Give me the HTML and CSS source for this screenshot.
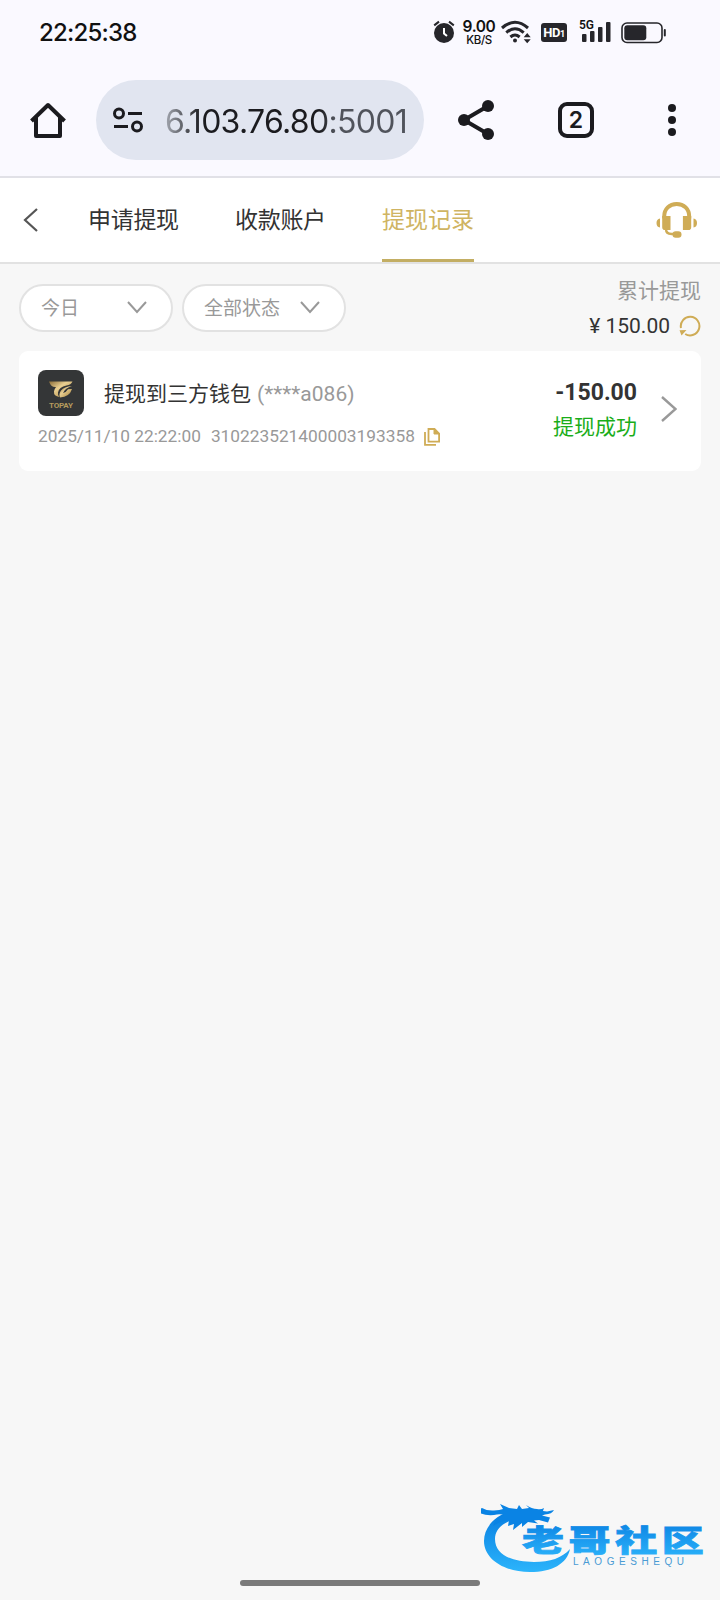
FILE: index.html
```html
<!DOCTYPE html>
<html lang="zh-CN">

	<head>
		<meta charset="UTF-8">
		<title>提现记录</title>
		<link rel="stylesheet" href="styles.css">
	</head>

	<body>
		<div class="status">
			<span class="clock">22:25:38</span>
			<div class="status-icons">
				<svg class="alarm" width="22" height="24" viewBox="0 0 22 24">
					<circle cx="11" cy="13" r="10" fill="#26262b" />
					<path d="M1.2 5.4L6 1.6M20.8 5.4L16 1.6" stroke="#26262b" stroke-width="2" />
					<path d="M11 8v5.5l3 2.6" fill="none" stroke="#fff" stroke-width="2" />
				</svg>
				<div class="speed"><b>9.00</b><span>KB/S</span></div>
				<svg class="wifi" width="30" height="24" viewBox="0 0 30 24" fill="none" stroke="#26262b" stroke-width="3">
					<path d="M1 8Q14-3.4 27 8M5.3 12.6Q14 5 22.7 12.6M9.4 17Q14 13 18.6 17" />
					<circle cx="14" cy="20.5" r="2" fill="#26262b" stroke="none" />
					<path d="M22.7 17.2h7L26.2 13zM22.7 19.2h7L26.2 23.2z" fill="#26262b" stroke="none" />
				</svg>
				<div class="hd">HD<small>1</small></div>
				<div class="signal">
					<span>5G</span>
					<svg width="30" height="22" viewBox="0 0 30 22" fill="#26262b">
						<rect x="1" y="14" width="4.5" height="8" rx="1" />
						<rect x="9" y="11" width="4.5" height="11" rx="1" />
						<rect x="17" y="7" width="4.5" height="15" rx="1" />
						<rect x="25" y="2" width="4.5" height="20" rx="1" />
					</svg>
				</div>
				<svg class="battery" width="45" height="22" viewBox="0 0 45 22">
					<rect x="1" y="1" width="40" height="19.5" rx="5" fill="none" stroke="#26262b" stroke-width="1.6" />
					<rect x="3.3" y="3.3" width="22" height="15" rx="3" fill="#26262b" />
					<rect x="42.8" y="7" width="2" height="7.5" rx="1" fill="#26262b" />
				</svg>
			</div>
		</div>

		<div class="browser">
			<svg class="home" width="36" height="36" viewBox="0 0 36 36" fill="none" stroke="#1b1b1f" stroke-width="4" stroke-linejoin="round">
				<path d="M1.5 19L18 3l16.5 16" />
				<path d="M6 15v19h24V15" />
			</svg>
			<div class="address">
				<svg width="30" height="26" viewBox="0 0 30 26" fill="none" stroke="#1b1b1f" stroke-width="3">
					<circle cx="6" cy="6.5" r="4.5" />
					<circle cx="24" cy="19.5" r="4.5" />
					<path d="M15 6.5h14M1 19.5h14" />
				</svg>
				<span class="url">6.103.76.80:5001</span>
			</div>
			<svg class="share" width="36" height="40" viewBox="0 0 36 40" fill="#1b1b1f">
				<path d="M30 6L6 20l24 14" fill="none" stroke="#1b1b1f" stroke-width="4" />
				<circle cx="6" cy="20" r="6" />
				<circle cx="30" cy="6" r="6" />
				<circle cx="30" cy="34" r="6" />
			</svg>
			<div class="tabs-count">2</div>
			<svg class="dots" width="8" height="32" viewBox="0 0 8 32" fill="#1b1b1f">
				<circle cx="4" cy="4" r="4" />
				<circle cx="4" cy="16" r="4" />
				<circle cx="4" cy="28" r="4" />
			</svg>
		</div>

		<div class="nav">
			<svg class="back" width="16" height="24" viewBox="0 0 16 24" fill="none" stroke="#555" stroke-width="2.2">
				<path d="M14 1L2 12l12 11" />
			</svg>
			<ul class="tabs">
				<li>申请提现</li>
				<li>收款账户</li>
				<li class="active">提现记录</li>
			</ul>
			<svg class="service" width="42" height="36" viewBox="0 0 42 36" fill="#cfac56">
				<path d="M8.2 16.5V14.5C8.2 7 13.5 2 20.700 2s12.500 5 12.500 12.500v2" fill="none" stroke="#cfac56" stroke-width="4" />
				<path d="M6.2 14h8.300v14H9q-2.800 0-2.800-2.800zM35.200 14h-8.300v14h5.500q2.800 0 2.800-2.800z" />
				<path d="M4 16.5v9Q0.500 25 0.500 21t3.500-4.500zM37.500 16.500v9Q41 25 41 21t-3.500-4.500z" />
				<path d="M10 27q0 5 5.500 5h5" fill="none" stroke="#cfac56" stroke-width="2.4" />
				<rect x="16.5" y="29.3" width="9" height="6.4" rx="3.2" />
			</svg>
		</div>

		<div class="filter">
			<div class="select day">
				<span>今日</span>
				<svg width="20" height="13" viewBox="0 0 20 13"><path d="M1 1l9 10 9-10" /></svg>
			</div>
			<div class="select state">
				<span>全部状态</span>
				<svg width="20" height="13" viewBox="0 0 20 13"><path d="M1 1l9 10 9-10" /></svg>
			</div>
			<div class="total">
				<p>累计提现</p>
				<div class="sum">
					<span>¥ 150.00</span>
					<svg width="22" height="22" viewBox="0 0 22 22" fill="none" stroke="#cfac56" stroke-width="2">
						<path d="M2 13A9.300 9.300 0 1 1 6.200 19" />
						<path d="M.5 15.300l7-.2-5 5.500z" fill="#cfac56" stroke="none" />
					</svg>
				</div>
			</div>
		</div>

		<div class="record">
			<div class="info">
				<div class="title">
					<svg class="pay" width="46" height="46" viewBox="0 0 46 46">
						<defs>
							<linearGradient id="gold" x1="0" y1="0" x2="1" y2="1">
								<stop offset="0" stop-color="#8a6c38" />
								<stop offset=".4" stop-color="#e9cf91" />
								<stop offset="1" stop-color="#a37c35" />
							</linearGradient>
						</defs>
						<rect width="46" height="46" rx="8" fill="#343637" />
						<path d="M11 11.500h23.500q-1.500 3.500-6 4-7.500 1.500-8.500 7-.5 3 1.500 4.500-6-1-5.500-5.500.3-2.500 2-4.500-5 .5-7-5.500z" fill="url(#gold)" />
						<path d="M34 16q-8 .5-11 4.500-2.500 3.500-1 7 9.500-.5 12-8.500l-4 .3q-1.500 3-5 3.700 2-5 9-7z" fill="url(#gold)" />
						<text x="11" y="38" textLength="24" lengthAdjust="spacing" fill="#b59a5d">TOPAY</text>
					</svg>
					<span class="name">提现到三方钱包</span>
					<span class="account">(****a086)</span>
				</div>
				<div class="meta">
					<span class="time">2025/11/10 22:22:00</span>
					<span class="order">310223521400003193358</span>
					<svg width="16" height="18" viewBox="0 0 16 18" fill="none" stroke="#cfac56" stroke-width="1.8">
						<path d="M4.500 1h6l4.600 4.600v8H4.500z" />
						<path d="M10 1v5h5z" fill="#cfac56" stroke-width="1" />
						<path d="M1 4v12.800h11" />
					</svg>
				</div>
			</div>
			<div class="result">
				<b>-150.00</b>
				<span>提现成功</span>
			</div>
			<svg class="more" width="16" height="26" viewBox="0 0 16 26" fill="none" stroke="#999" stroke-width="2.4">
				<path d="M1 1l13.500 12L1 25" />
			</svg>
		</div>

		<div class="home-bar"></div>

		<svg class="watermark" width="226" height="76" viewBox="0 0 226 76">
			<defs>
				<linearGradient id="blue" x1="0" y1="0" x2="0" y2="1">
					<stop offset="0" stop-color="#087de0" />
					<stop offset="1" stop-color="#2cb4fb" />
				</linearGradient>
			</defs>
			<path d="M30 12C13 17 3 29 3 42c0 18 20 31 46 31 22 0 37-8 40-23-8 9-20 13-36 13-22 0-39-7-39-23 0-11 10-18 24-21z" fill="url(#blue)" />
			<path d="M1 9q5 3 12 2.500 6-.5 9-1.500L19 5l9 4 8 1 2-4 3 4 7-1-3-3q6 4 11 4 4 1 7-1l-1 3 4 .5 7-1.500q-2 4-9 4.500l-3 1 8 2-2 5-9-2.500-5 .5 4 3-10-1.500-6 5 0-4-9 7 1-6-6 2 1-6q-9 1-16 6 2-7 11-11-4-1.500-10 0-11 1-17-4z" fill="#0a83e4" />
			<g fill="url(#blue)" stroke="url(#blue)" stroke-width=".8" transform="translate(41 52) scale(1.4 .98)">
				<text class="wm-name" x="0" y="0">老哥社区</text>
			</g>
			<text class="wm-sub" x="92" y="66" textLength="111" fill="#4a9bd4">LAOGESHEQU</text>
		</svg>
	</body>

</html>
```
FILE: styles.css
```css
* {
	margin: 0;
	padding: 0;
	box-sizing: border-box;
}

ul,
li {
	list-style: none;
}

svg {
	display: block;
	flex: none;
}

body {
	position: relative;
	height: 1600px;
	overflow: hidden;
	background: #f7f7f7;
	color: #333;
	font-family: Roboto, "Noto Sans CJK SC", sans-serif;
	white-space: nowrap;
}

/* 状态栏 */
.status {
	display: flex;
	justify-content: space-between;
	height: 64px;
	padding: 0 54px 0 39px;
	background: #faf9ff;
	color: #111;
}

.clock {
	font: 500 24px/66px Inter, sans-serif;
	letter-spacing: -0.8px;
}

.status-icons {
	display: flex;
	align-items: flex-start;
	padding-top: 20px;
}

.speed {
	width: 34px;
	margin-left: 7px;
	text-align: center;
}

.speed b,
.speed span {
	display: block;
	font: 600 15.5px/14px Inter, sans-serif;
	letter-spacing: -0.4px;
}

.speed span {
	font-size: 11.5px;
	font-weight: 500;
	line-height: 13px;
}

.wifi {
	margin-left: 5px;
}

.hd {
	width: 26px;
	height: 19px;
	margin: 3px 0 0 10px;
	border-radius: 3px;
	background: #26262b;
	color: #fff;
	font: bold 13px/19px Roboto, sans-serif;
	letter-spacing: -0.5px;
	text-align: center;
}

.hd small {
	font-size: 9px;
}

.signal {
	position: relative;
	margin-left: 14px;
}

.signal span {
	position: absolute;
	left: -2px;
	top: 0;
	background: #faf9ff;
	font: 600 12px/11px Roboto, sans-serif;
}

.battery {
	margin: 2px 0 0 10px;
}

/* 浏览器工具栏 */
.browser {
	display: flex;
	align-items: center;
	height: 114px;
	padding: 0 44px 0 30px;
	border-bottom: 2px solid #e1e1e7;
	background: #faf9ff;
}

.address {
	display: flex;
	align-items: center;
	width: 328px;
	height: 80px;
	margin-left: 30px;
	padding-left: 17px;
	border-radius: 40px;
	background: #e1e5f0;
}

.url {
	margin: 3px 0 0 22px;
	background: linear-gradient(90deg, #a3a7b0 0, #1b1b1f 15%, #1b1b1f 64%, #50535b 70%, #50535b 100%);
	-webkit-background-clip: text;
	background-clip: text;
	color: transparent;
	font: 32px/40px Inter, sans-serif;
	letter-spacing: -0.7px;
}

.share {
	margin-left: 34px;
}

.tabs-count {
	width: 36px;
	height: 36px;
	margin-left: 64px;
	border: 4px solid #1b1b1f;
	border-radius: 9px;
	color: #1b1b1f;
	font: 600 23px/28px Inter, sans-serif;
	text-align: center;
}

.dots {
	margin-left: auto;
}

/* 顶部导航 */
.nav {
	display: flex;
	align-items: center;
	height: 86px;
	padding: 0 22px 0 23px;
	border-bottom: 2px solid #e2e2e2;
	background: #fff;
}

.tabs {
	display: flex;
	gap: 55px;
	height: 84px;
	margin-left: 49px;
}

.tabs li {
	width: 92px;
	font-size: 23px;
	line-height: 85px;
	letter-spacing: -0.3px;
}

.tabs li.active {
	height: 84px;
	border-bottom: 3px solid #c3ae63;
	color: #cfb462;
	letter-spacing: 0;
}

.service {
	margin-left: auto;
}

/* 筛选 */
.filter {
	display: flex;
	height: 87px;
	padding: 0 19px;
}

.select {
	display: flex;
	align-items: center;
	justify-content: space-between;
	height: 48px;
	margin-top: 20px;
	padding: 0 24px 3px 20px;
	border: 2px solid #e2e2e2;
	border-radius: 24px;
	background: #fff;
	color: #999;
	font-size: 19px;
}

.day {
	width: 154px;
}

.state {
	width: 164px;
	margin-left: 9px;
}

.select svg {
	margin-top: 2px;
	fill: none;
	stroke: #999;
	stroke-width: 2;
}

.total {
	margin-left: auto;
	color: #999;
	font-size: 21px;
	line-height: 34px;
	padding-top: 10px;
}

.total p {
	text-align: right;
}

.sum {
	display: flex;
	align-items: center;
	gap: 9px;
	padding-top: 1px;
	color: #333;
}

/* 提现记录 */
.record {
	display: flex;
	height: 120px;
	margin: 0 19px;
	padding: 19px 23px 0 19px;
	border-radius: 9px;
	background: #fff;
}

.title {
	display: flex;
	align-items: center;
	height: 46px;
	font-size: 21px;
}

.pay text {
	font: bold 8px Roboto, sans-serif;
}

.name {
	margin: -2px 0 0 20px;
}

.account {
	margin: 2px 0 0 6px;
	color: #999;
}

.meta {
	display: flex;
	align-items: center;
	height: 40px;
	color: #999;
	font-size: 17.3px;
}

.order {
	margin-left: 10px;
}

.meta svg {
	margin: 2px 0 0 9px;
}

.result {
	margin-left: auto;
	text-align: right;
}

.result b,
.result span {
	display: block;
}

.result b {
	font-size: 23px;
	line-height: 45px;
}

.result span {
	color: #1aad19;
	font-size: 21px;
	line-height: 24px;
}

.more {
	margin: 26px 1px 0 24px;
}

.home-bar {
	position: absolute;
	left: 240px;
	bottom: 14px;
	width: 240px;
	height: 6px;
	border-radius: 3px;
	background: #7a7a7a;
}

.watermark {
	position: absolute;
	left: 481px;
	top: 1499px;
}

.wm-name {
	font: 900 30px "Noto Sans CJK SC", sans-serif;
	letter-spacing: 3.3px;
}

.wm-sub {
	font: 10px "Liberation Sans", sans-serif;
}
```
